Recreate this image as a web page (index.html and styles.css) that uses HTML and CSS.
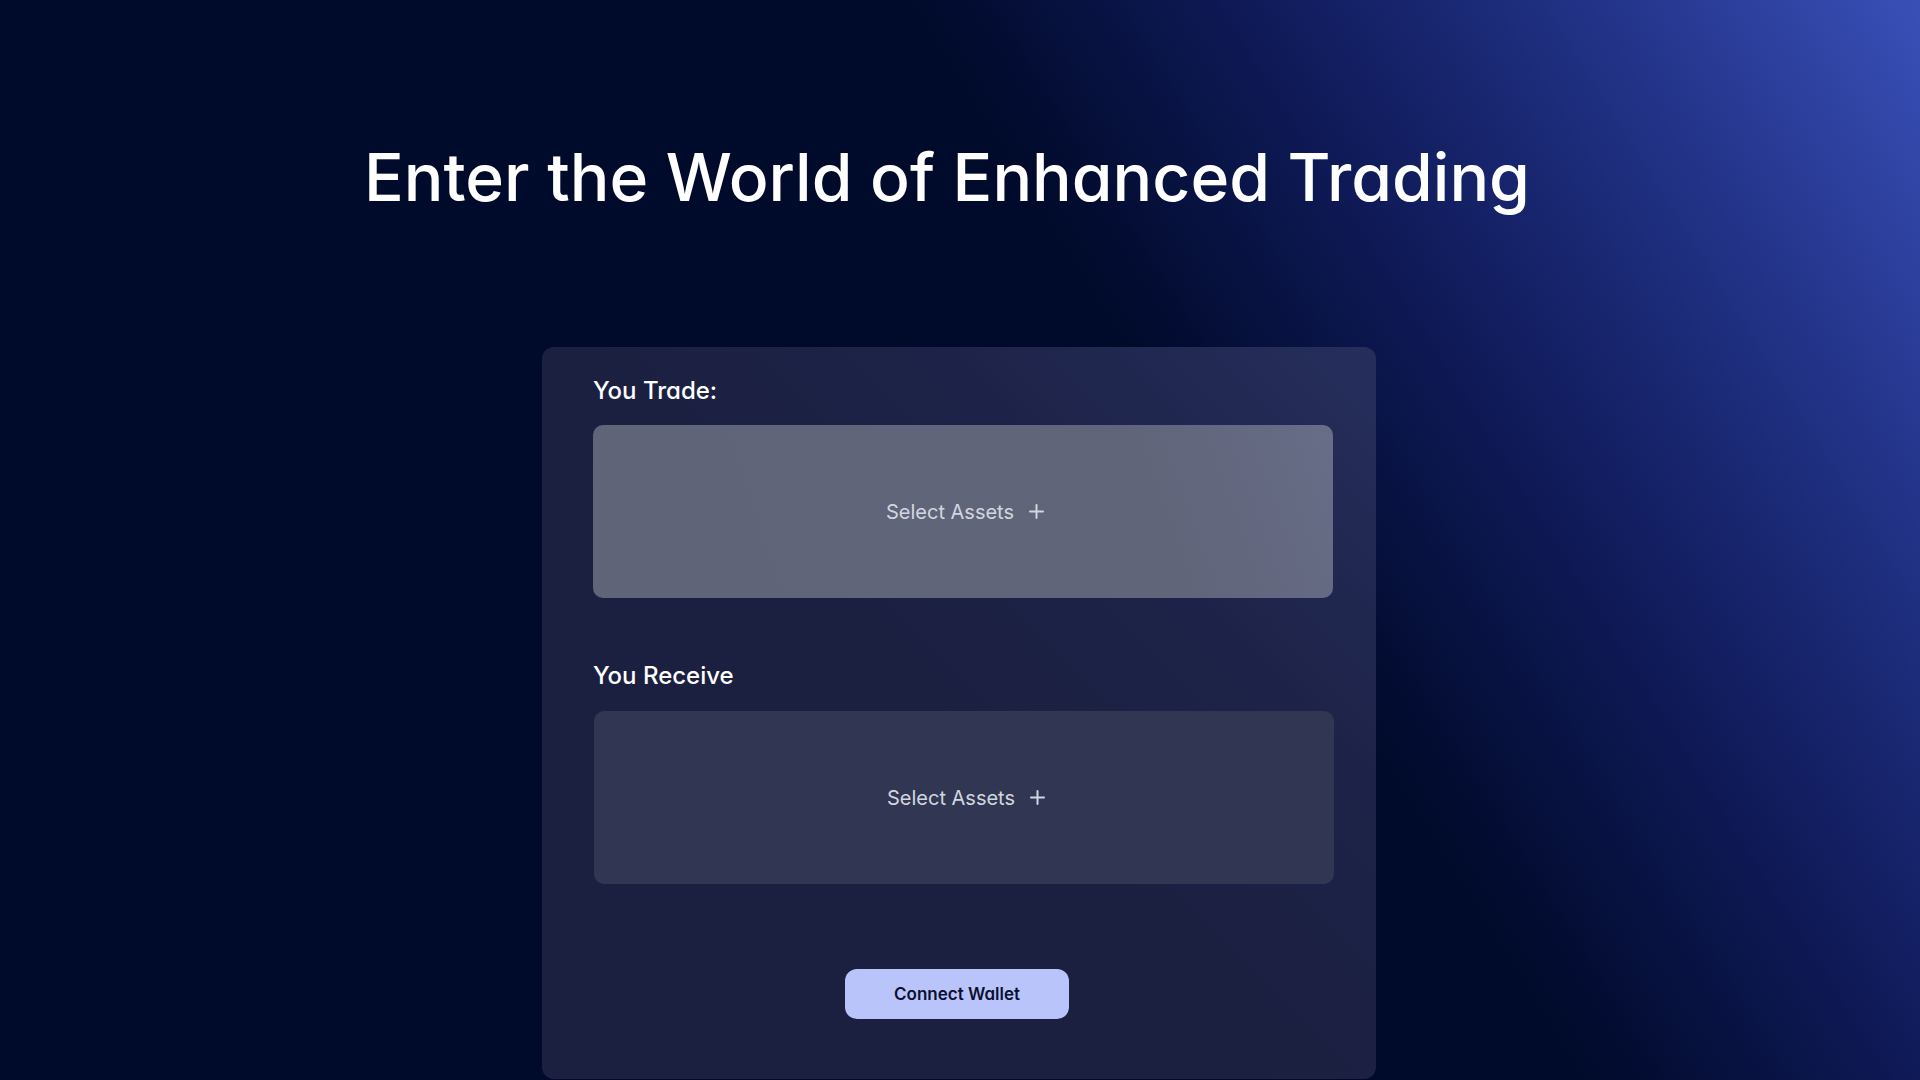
FILE: index.html
```html
<!DOCTYPE html>
<html lang="en">
<head>
<meta charset="utf-8">
<title>Enhanced Trading</title>
<link rel="stylesheet" href="styles.css">
</head>
<body>
<main class="page">
  <h1 class="title">Enter the World of Enhanced Trading</h1>
  <section class="card">
    <h2 class="label">You Trade:</h2>
    <button class="asset-box asset-box--trade" type="button">
      <span class="asset-text">Select Assets</span>
      <svg class="plus" width="15" height="15" viewBox="0 0 15 15" aria-hidden="true"><path d="M7.5 1v13M1 7.5h13" stroke="currentColor" stroke-width="2" stroke-linecap="round" fill="none"/></svg>
    </button>
    <h2 class="label label--receive">You Receive</h2>
    <button class="asset-box asset-box--receive" type="button">
      <span class="asset-text">Select Assets</span>
      <svg class="plus" width="15" height="15" viewBox="0 0 15 15" aria-hidden="true"><path d="M7.5 1v13M1 7.5h13" stroke="currentColor" stroke-width="2" stroke-linecap="round" fill="none"/></svg>
    </button>
    <button class="connect" type="button">Connect Wallet</button>
  </section>
</main>
</body>
</html>
```

FILE: styles.css
```css
* { box-sizing: border-box; }

html, body {
  margin: 0;
  padding: 0;
  height: 100%;
}

body {
  font-family: Inter, "Noto Sans", sans-serif;
  font-feature-settings: "cv11" 1;
  background: linear-gradient(58deg, #000a2a 0%, #000a2a 61%, #0f1a58 74%, #23348a 88%, #3a50b8 100%);
  color: #fff;
  overflow: hidden;
}

.page {
  min-height: 100vh;
  display: flex;
  flex-direction: column;
  align-items: center;
  padding-top: 137px;
}

.title {
  margin: 0 26px 0 0;
  font-size: 66px;
  line-height: 80px;
  font-weight: 500;
  letter-spacing: 0;
  color: #ffffff;
}

.card {
  margin: 130px 2px 0 0;
  width: 834px;
  height: 732px;
  padding: 29px 43px 0 51px;
  border-radius: 12px;
  background: linear-gradient(225deg, #262e5c 0%, #1d2348 28%, #1b2040 55%, #1b2040 100%);
  display: flex;
  flex-direction: column;
}

.label {
  margin: 0;
  font-size: 24px;
  line-height: 30px;
  font-weight: 500;
  color: #ffffff;
}

.label--receive {
  margin-top: 63px;
}

.asset-box {
  margin-top: 19px;
  width: 740px;
  height: 173px;
  border: none;
  border-radius: 10px;
  display: flex;
  align-items: center;
  justify-content: center;
  gap: 15px;
  padding: 0 0 0 4px;
  font-family: inherit;
  font-feature-settings: inherit;
  color: #d3d6df;
  cursor: pointer;
}

.asset-box--trade {
  background: linear-gradient(250deg, #686d88 0%, #60657a 25%, #5f6478 100%);
}

.asset-box--receive {
  margin-top: 20px;
  margin-left: 1px;
  background: #313753;
}

.asset-text {
  font-size: 20px;
  line-height: 24px;
  font-weight: 400;
}

.plus {
  display: block;
  color: #d3d6df;
}

.connect {
  margin: 85px 12px 0 0;
  align-self: center;
  width: 224px;
  height: 50px;
  border: none;
  border-radius: 12px;
  background: #b9c5fa;
  color: #0c1030;
  font-family: inherit;
  font-feature-settings: inherit;
  font-size: 17px;
  font-weight: 600;
  cursor: pointer;
}
```
